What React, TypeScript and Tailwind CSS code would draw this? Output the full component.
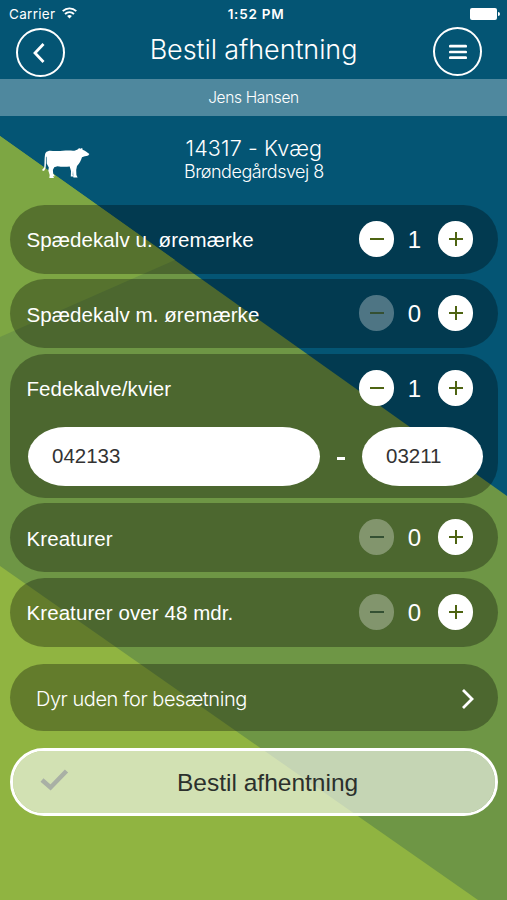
import { useState } from 'react'

interface Animal {
  id: string
  label: string
  count: number
  earTag?: { herd: string; number: string }
}

const ANIMALS: Animal[] = [
  { id: 'spaed-u', label: 'Spædekalv u. øremærke', count: 1 },
  { id: 'spaed-m', label: 'Spædekalv m. øremærke', count: 0 },
  { id: 'fedekalve', label: 'Fedekalve/kvier', count: 1, earTag: { herd: '042133', number: '03211' } },
  { id: 'kreaturer', label: 'Kreaturer', count: 0 },
  { id: 'kreaturer-48', label: 'Kreaturer over 48 mdr.', count: 0 },
]

function Backdrop() {
  return (
    <svg className="absolute inset-0 h-full w-full" viewBox="0 0 507 900" preserveAspectRatio="none" aria-hidden>
      <rect width="507" height="900" fill="#045574" />
      <path d="M0 136 507 496V900H0Z" fill="#6e9645" />
      <path d="M0 136 175 260 0 337Z" fill="#7da643" />
      <path d="M0 566 478 900H0Z" fill="#90b441" />
    </svg>
  )
}

function Cow() {
  return (
    <svg width="48" height="31" viewBox="0 0 48 31" fill="#fff" aria-hidden>
      <path d="M6 3.2C8 2 11 3.3 15 3.1 21 2.8 26 2.2 31 2.8 33 2.8 34.6 1.8 36.3.9L37 .1 38.2.8 40.2.1 40.6 1.7C43 2.6 45 4.3 47.4 5.9L46.2 7.6C44 8.4 41.5 8.4 40 9.3 38.8 12.6 37.6 15.6 35 18L34.2 22 34.4 27 35.6 29.5H31.4L31 22.5 30.7 27 31.5 28.4H28.8L29 23 27.7 18.4C23 19.2 19 18.8 15.5 18.2L12.2 19.3 10.9 22 11.2 25.8 13 28.2H11L12.1 30H7.3L7.7 27 6.3 22.6 6.8 19.5 4.7 15.6 4.6 9.5 4 8.3C3.8 12 4.3 17 3.5 20.3L2 23-.1 22.1 2.2 19.5C2.8 15 2.2 8 3.5 5 4 4 5 3.4 6 3.2Z" />
    </svg>
  )
}

function StatusBar() {
  return (
    <div className="flex h-7 items-center justify-between pl-[9px] pr-[7px] font-['Inter',sans-serif] text-[13.5px] text-white">
      <div className="flex w-[120px] items-center gap-[7px]">
        <span className="tracking-[0.3px]">Carrier</span>
        <svg className="-mt-0.5" width="15" height="12" viewBox="0 0 15 12" fill="none" stroke="#fff" strokeWidth="1.9" aria-hidden>
          <path d="M.7 4.1C4.6.4 10.4.4 14.3 4.1M3 7C5.6 4.6 9.4 4.6 12 7" />
          <path d="M5.1 9C6.5 7.7 8.5 7.7 9.9 9L7.5 11.5Z" fill="#fff" stroke="none" />
        </svg>
      </div>
      <span className="-mr-[3px] text-[13.5px] font-semibold tracking-[0.75px]">1:52 PM</span>
      <div className="flex w-[120px] items-center justify-end gap-px">
        <span className="h-3 w-[27px] rounded-[2px] bg-white" />
        <span className="h-1 w-[1.5px] rounded-r bg-white" />
      </div>
    </div>
  )
}

function Header() {
  return (
    <header className="flex h-[51px] items-start justify-between pl-[16px] pr-[25px]">
      <button type="button" aria-label="Tilbage" className="flex h-[49px] w-[49px] items-center justify-center rounded-full border-2 border-white pr-[3px]">
        <svg width="12" height="20" viewBox="0 0 12 20" fill="none" stroke="#fff" strokeWidth="2.8" aria-hidden>
          <path d="M10.5 1 2 10 10.5 19" />
        </svg>
      </button>
      <h1 className="pt-[2px] pl-[9px] font-['Inter',sans-serif] text-[27px] leading-[40px] font-light tracking-[-0.1px] whitespace-nowrap text-white">
        Bestil afhentning
      </h1>
      <button type="button" aria-label="Menu" className="-mt-px flex h-[49px] w-[49px] items-center justify-center rounded-full border-2 border-white">
        <svg width="18" height="16" viewBox="0 0 18 16" stroke="#fff" strokeWidth="2.7" strokeLinecap="round" aria-hidden>
          <path d="M1.3 2.2H16.7M1.3 8H16.7M1.3 13.7H16.7" />
        </svg>
      </button>
    </header>
  )
}

interface StepButtonProps {
  kind: 'minus' | 'plus'
  disabled?: boolean
  onClick: () => void
}

function StepButton({ kind, disabled, onClick }: StepButtonProps) {
  return (
    <button
      type="button"
      disabled={disabled}
      onClick={onClick}
      aria-label={kind === 'plus' ? 'Flere' : 'Færre'}
      className={`flex h-9 w-[35px] items-center justify-center rounded-full ${disabled ? 'bg-white/30' : 'bg-white'}`}
    >
      <svg width="14" height="14" viewBox="0 0 14 14" stroke={disabled ? '#345033' : '#4e6412'} strokeWidth="2" aria-hidden>
        <path d={kind === 'plus' ? 'M0 7H14M7 0V14' : 'M0 7H14'} />
      </svg>
    </button>
  )
}

function AnimalRow({ animal }: { animal: Animal }) {
  const [count, setCount] = useState(animal.count)

  return (
    <li className={`rounded-[35px] bg-black/[0.31] ${animal.earTag ? 'h-[144px]' : 'h-[69px]'}`}>
      <div className="flex h-[69px] items-center justify-between pr-[24.5px] pb-px pl-[17px] text-white">
        <span className="pt-1 text-[20.5px] tracking-[0.08px]">{animal.label}</span>
        <div className="flex items-center">
          <StepButton kind="minus" disabled={count === 0} onClick={() => setCount(count - 1)} />
          <span className="w-[44px] pt-0.5 pr-[3px] text-center text-[24px] leading-8">{count}</span>
          <StepButton kind="plus" onClick={() => setCount(count + 1)} />
        </div>
      </div>
      {animal.earTag && (
        <div className="mt-[4px] flex items-center pr-[14px] pl-[18.5px]">
          <input
            defaultValue={animal.earTag.herd}
            className="h-[59px] w-[292px] rounded-[38px/30px] bg-white pl-6 text-[20.5px] text-[#333]"
          />
          <span className="mx-[17px] mt-1 h-[3px] w-2 bg-white" />
          <input
            defaultValue={animal.earTag.number}
            className="h-[59px] w-[121px] rounded-[38px/30px] bg-white pl-6 text-[20.5px] text-[#333]"
          />
        </div>
      )}
    </li>
  )
}

export default function App() {
  return (
    <div className="relative h-[900px] w-full overflow-hidden font-['Liberation_Sans',sans-serif]">
      <Backdrop />
      <div className="relative flex h-full flex-col">
        <StatusBar />
        <Header />
        <div className="h-[37px] bg-white/30 text-center font-['Inter',sans-serif] text-[15.5px] leading-[37px] font-light tracking-[-0.35px] text-white">
          Jens Hansen
        </div>

        <section className="flex h-[88.5px] items-start pl-[42px]">
          <div className="pt-[32px]">
            <Cow />
          </div>
          <div className="ml-[94px] pt-5 text-center font-['Inter',sans-serif] font-light text-white">
            <div className="text-[21.5px] leading-6 tracking-[0.15px]">14317 - Kvæg</div>
            <div className="text-[18px] leading-[23px] tracking-[-0.5px]">Brøndegårdsvej 8</div>
          </div>
        </section>

        <main className="flex flex-col px-[9.5px]">
          <ul className="flex flex-col gap-[5.5px]">
            {ANIMALS.map((animal) => (
              <AnimalRow key={animal.id} animal={animal} />
            ))}
          </ul>

          <button type="button" className="mt-[17.5px] flex h-[67px] items-center justify-between rounded-[34px] bg-black/[0.31] pr-[24px] pl-[26.5px] text-white">
            <span className="pt-0.5 font-['Inter',sans-serif] text-[20px] font-light tracking-[-0.45px]">Dyr uden for besætning</span>
            <svg className="mt-[3px]" width="13" height="20" viewBox="0 0 13 20" fill="none" stroke="#fff" strokeWidth="2.8" aria-hidden>
              <path d="M2 1 11 10 2 19" />
            </svg>
          </button>

          <button type="button" className="mt-[17px] flex h-[68px] items-center rounded-[34px] border-[3px] border-white bg-white/60 bg-clip-padding pl-[27px] text-[#2b302c]">
            <svg className="mb-1" width="29" height="22" viewBox="0 0 29 22" fill="none" stroke="#a9b0a5" strokeWidth="4.5" aria-hidden>
              <path d="M2 11 10.5 18.5 26.5 2" />
            </svg>
            <span className="ml-[108.5px] pt-0.5 text-[24.5px]">Bestil afhentning</span>
          </button>
        </main>
      </div>
    </div>
  )
}
